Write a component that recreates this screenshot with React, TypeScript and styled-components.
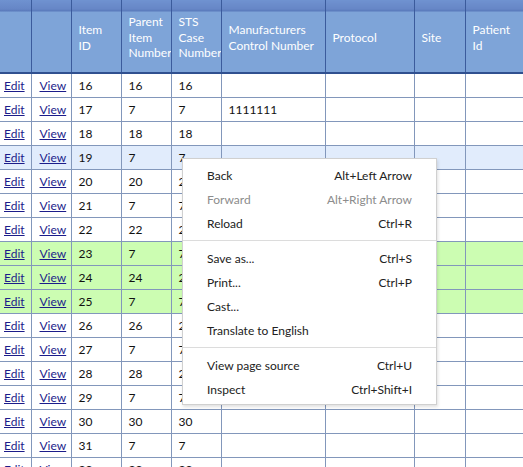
import React from "react";
import styled, { createGlobalStyle } from "styled-components";

type RowKind = "plain" | "hover" | "green";

interface IRow {
  id: number;
  parent: number;
  sts: number;
  mcn?: string;
  kind?: RowKind;
}

const rows: IRow[] = [
  { id: 16, parent: 16, sts: 16 },
  { id: 17, parent: 7, sts: 7, mcn: "1111111" },
  { id: 18, parent: 18, sts: 18 },
  { id: 19, parent: 7, sts: 7, kind: "hover" },
  { id: 20, parent: 20, sts: 20 },
  { id: 21, parent: 7, sts: 7 },
  { id: 22, parent: 22, sts: 22 },
  { id: 23, parent: 7, sts: 7, kind: "green" },
  { id: 24, parent: 24, sts: 24, kind: "green" },
  { id: 25, parent: 7, sts: 7, kind: "green" },
  { id: 26, parent: 26, sts: 26 },
  { id: 27, parent: 7, sts: 7 },
  { id: 28, parent: 28, sts: 28 },
  { id: 29, parent: 7, sts: 7 },
  { id: 30, parent: 30, sts: 30 },
  { id: 31, parent: 7, sts: 7 },
  { id: 32, parent: 32, sts: 32 },
];

const columns = [
  { title: "", width: 31 },
  { title: "", width: 40 },
  { title: "Item ID", width: 50 },
  { title: "Parent Item Number", width: 50 },
  { title: "STS Case Number", width: 50 },
  { title: "Manufacturers Control Number", width: 104 },
  { title: "Protocol", width: 89 },
  { title: "Site", width: 51 },
  { title: "Patient Id", width: 60 },
];

type MenuEntry = { label: string; keys?: string; disabled?: boolean } | "sep";

const menu: MenuEntry[] = [
  { label: "Back", keys: "Alt+Left Arrow" },
  { label: "Forward", keys: "Alt+Right Arrow", disabled: true },
  { label: "Reload", keys: "Ctrl+R" },
  "sep",
  { label: "Save as...", keys: "Ctrl+S" },
  { label: "Print...", keys: "Ctrl+P" },
  { label: "Cast..." },
  { label: "Translate to English" },
  "sep",
  { label: "View page source", keys: "Ctrl+U" },
  { label: "Inspect", keys: "Ctrl+Shift+I" },
];

const App = () => {
  return (
    <Page>
      <GlobalStyle />
      <Grid>
        <colgroup>
          {columns.map((c, i) => (
            <col key={i} style={{ width: c.width }} />
          ))}
        </colgroup>
        <thead>
          <tr>
            {columns.map((c, i) => (
              <HeadCell key={i}>
                <HeadText>{c.title}</HeadText>
              </HeadCell>
            ))}
          </tr>
        </thead>
        <tbody>
          {rows.map((r) => (
            <Row key={r.id} $kind={r.kind ?? "plain"}>
              <LinkCell $pad={4}>
                <a href="#">Edit</a>
              </LinkCell>
              <LinkCell $pad={8}>
                <a href="#">View</a>
              </LinkCell>
              <Cell>{r.id}</Cell>
              <Cell>{r.parent}</Cell>
              <Cell>{r.sts}</Cell>
              <Cell>{r.mcn ?? ""}</Cell>
              <Cell />
              <Cell />
              <Cell />
            </Row>
          ))}
        </tbody>
      </Grid>

      <Menu>
        {menu.map((m, i) =>
          m === "sep" ? (
            <Separator key={i} />
          ) : (
            <MenuItem key={i} $disabled={!!m.disabled}>
              <span>{m.label}</span>
              <span>{m.keys ?? ""}</span>
            </MenuItem>
          )
        )}
      </Menu>
    </Page>
  );
};

const GlobalStyle = createGlobalStyle`
  html, body {
    margin: 0;
    padding: 0;
    background: #ffffff;
    overflow: hidden;
  }
  body {
    font-family: "Segoe UI", Lato, "Noto Sans", sans-serif;
    font-size: 12px;
  }
`;

const Page = styled.div`
  position: relative;
  width: 523px;
  height: 467px;
  overflow: hidden;
`;

const Grid = styled.table`
  border-collapse: collapse;
  table-layout: fixed;
  width: 525px;
`;

const HeadCell = styled.th`
  height: 72px;
  padding: 0;
  border-left: 1px solid #3b5b9c;
  border-right: 1px solid #3b5b9c;
  border-bottom: 2px solid #30508f;
  background: linear-gradient(
    to bottom,
    #6f92d0 0px,
    #6686c6 9px,
    #5979bb 11px,
    #7ea4d8 12px,
    #7ea4d8 100%
  );
  vertical-align: middle;
  text-align: left;
  overflow: hidden;
  &:first-child {
    border-left: none;
  }
`;

const HeadText = styled.div`
  padding: 3px 8px 0 7px;
  color: #ffffff;
  font-weight: normal;
  font-size: 12px;
  line-height: 15.5px;
  white-space: normal;
  overflow: hidden;
`;

const Row = styled.tr<{ $kind: RowKind }>`
  height: 24px;
  background: ${(p) =>
    p.$kind === "hover" ? "#e1ecfc" : p.$kind === "green" ? "#ccfdb2" : "#ffffff"};
`;

const Cell = styled.td`
  height: 23px;
  padding: 0 0 0 7px;
  border: 1px solid #8297bb;
  color: #111111;
  line-height: 16px;
  white-space: nowrap;
  overflow: hidden;
  &:first-child {
    border-left: none;
  }
`;

const LinkCell = styled(Cell)<{ $pad: number }>`
  padding-left: ${(p) => p.$pad}px;
  a {
    color: #1c1c8a;
    text-decoration: underline;
  }
`;

const Menu = styled.div`
  position: absolute;
  left: 182px;
  top: 158px;
  width: 253px;
  padding: 4px 0 3px;
  background: #ffffff;
  border: 1px solid #d0d0d0;
  box-shadow: 1px 2px 3px rgba(0, 0, 0, 0.12);
`;

const MenuItem = styled.div<{ $disabled: boolean }>`
  display: flex;
  justify-content: space-between;
  align-items: center;
  height: 24px;
  padding: 0 24px;
  color: ${(p) => (p.$disabled ? "#8c8c8c" : "#222222")};
  font-size: 12px;
`;

const Separator = styled.div`
  height: 1px;
  margin: 5px 0;
  background: #dcdcdc;
`;

export default App;
